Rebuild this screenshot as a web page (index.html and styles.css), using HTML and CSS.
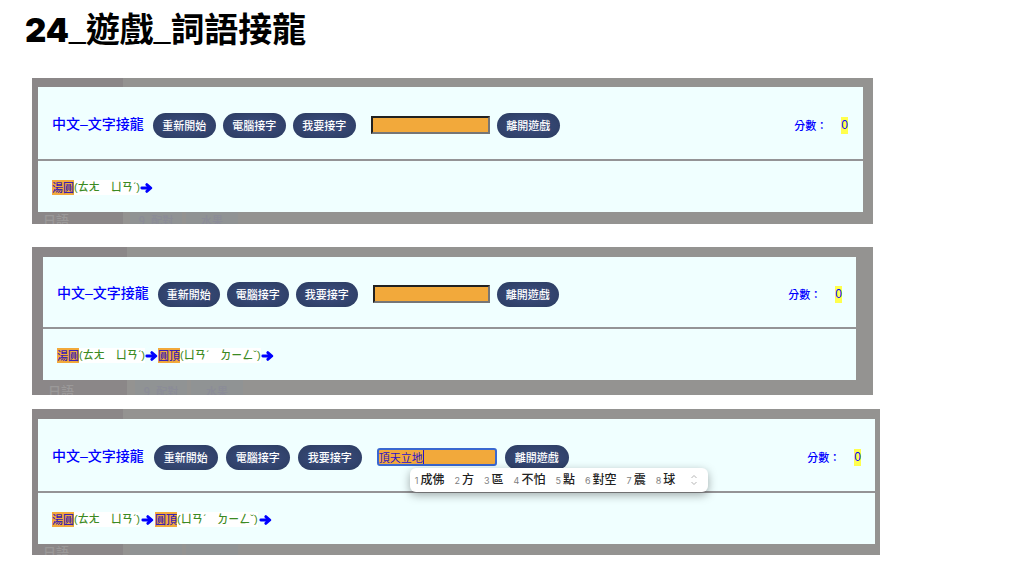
FILE: index.html
```
<!DOCTYPE html>
<html lang="zh-TW">
<head>
    <meta charset="UTF-8">
    <meta name="viewport" content="width=device-width, initial-scale=1.0">
    <title>24_遊戲_詞語接龍</title>
    <link rel="stylesheet" href="styles.css">
</head>
<body>
    <svg width="0" height="0" class="defs">
        <symbol id="arrow" viewBox="0 0 13 10">
            <path d="M1.8 5H10M6.8 1.6L10.8 5L6.8 8.4" fill="none" stroke="#0000ff" stroke-width="2.8" stroke-linecap="round" stroke-linejoin="round"/>
        </symbol>
    </svg>
    <h1><span class="num">24</span><span class="bar">_</span>遊戲<span class="bar">_</span>詞語接龍</h1>

    <section class="screen screen-start">
        <div class="game">
            <div class="toolbar">
                <h2>中文–文字接龍</h2>
                <button type="button">重新開始</button>
                <button type="button">電腦接字</button>
                <button type="button">我要接字</button>
                <input type="text" class="word-input" aria-label="接字">
                <button type="button">離開遊戲</button>
                <div class="score">分數：<span class="points">0</span></div>
            </div>
            <div class="chain">
                <mark>湯圓</mark><span class="zhuyin">(ㄊㄤ　ㄩㄢˊ)</span><svg class="arrow"><use href="#arrow"/></svg>
            </div>
        </div>
        <div class="behind">
            <span class="lang">日語</span>
            <span class="tile">9_配對</span>
            <span class="tile">水果</span>
        </div>
    </section>

    <section class="screen screen-computer">
        <div class="game">
            <div class="toolbar">
                <h2>中文–文字接龍</h2>
                <button type="button">重新開始</button>
                <button type="button">電腦接字</button>
                <button type="button">我要接字</button>
                <input type="text" class="word-input" aria-label="接字">
                <button type="button">離開遊戲</button>
                <div class="score">分數：<span class="points">0</span></div>
            </div>
            <div class="chain">
                <mark>湯圓</mark><span class="zhuyin">(ㄊㄤ　ㄩㄢˊ)</span><svg class="arrow"><use href="#arrow"/></svg><mark>圓頂</mark><span class="zhuyin">(ㄩㄢˊ　ㄉㄧㄥˇ)</span><svg class="arrow"><use href="#arrow"/></svg>
            </div>
        </div>
        <div class="behind">
            <span class="lang">日語</span>
            <span class="tile">9_配對</span>
            <span class="tile">水果</span>
        </div>
    </section>

    <section class="screen screen-player">
        <div class="game">
            <div class="toolbar">
                <h2>中文–文字接龍</h2>
                <button type="button">重新開始</button>
                <button type="button">電腦接字</button>
                <button type="button">我要接字</button>
                <div class="field">
                    <input type="text" class="word-input typing" aria-label="接字" value="頂天立地">
                    <span class="caret"></span>
                    <ol class="candidates">
                        <li><small>1</small>成佛</li>
                        <li><small>2</small>方</li>
                        <li><small>3</small>區</li>
                        <li><small>4</small>不怕</li>
                        <li><small>5</small>點</li>
                        <li><small>6</small>對空</li>
                        <li><small>7</small>震</li>
                        <li><small>8</small>球</li>
                        <li class="more">
                            <svg width="8" height="12" viewBox="0 0 8 12">
                                <path d="M1.5 4L4 1.5L6.5 4M1.5 8L4 10.5L6.5 8" fill="none" stroke="#b5b5b5" stroke-width="1"/>
                            </svg>
                        </li>
                    </ol>
                </div>
                <button type="button">離開遊戲</button>
                <div class="score">分數：<span class="points">0</span></div>
            </div>
            <div class="chain">
                <mark>湯圓</mark><span class="zhuyin">(ㄊㄤ　ㄩㄢˊ)</span><svg class="arrow"><use href="#arrow"/></svg><mark>圓頂</mark><span class="zhuyin">(ㄩㄢˊ　ㄉㄧㄥˇ)</span><svg class="arrow"><use href="#arrow"/></svg>
            </div>
        </div>
        <div class="behind">
            <span class="lang">日語</span>
            <span class="tile"></span>
            <span class="tile"></span>
        </div>
    </section>
</body>
</html>
```

FILE: styles.css
```
* {
    box-sizing: border-box;
}
body {
    font-family: "Noto Sans CJK TC", sans-serif;
    margin: 0;
    padding: 6px 151px 0 32px;
    background-color: white;
    color: #0000ff;
    font-size: 11px;
    font-weight: 500;
}
.defs {
    position: absolute;
}
h1 {
    margin: 0 0 28px -7px;
    color: black;
    font-size: 34px;
    line-height: 44px;
    font-weight: bold;
}
h1 .num {
    font-family: Inter, sans-serif;
    font-size: 33px;
    line-height: 1;
    font-weight: 900;
}
h1 .bar {
    font-family: "Liberation Sans", sans-serif;
    font-size: 30px;
    line-height: 1;
    font-weight: normal;
    vertical-align: 4px;
}
.screen {
    background: linear-gradient(to right, #8b8788 91px, #949391 91px);
}
.screen-start {
    padding: 9px 10px 0 6px;
    margin-bottom: 23px;
}
.screen-computer {
    padding: 10px 17px 0 11px;
    margin-bottom: 14px;
    background: linear-gradient(to right, #8b8788 95px, #949391 95px);
}
.screen-player {
    padding: 10px 5px 0 6px;
    margin-right: -7px;
}
.game {
    background-color: #f0ffff;
}
.toolbar {
    display: flex;
    align-items: center;
    gap: 7px;
    height: 74px;
    padding: 4px 15px 0 14px;
    border-bottom: 2px solid #949496;
}
.screen-computer .toolbar {
    height: 72px;
    padding-right: 14px;
}
.screen-player .toolbar {
    gap: 8px;
    padding-right: 14px;
}
h2 {
    margin: 0 2px 0 0;
    padding-bottom: 3px;
    font-family: "Liberation Sans", "Noto Sans CJK TC", sans-serif;
    font-size: 14px;
    line-height: 20px;
    font-weight: 500;
}
button {
    min-width: 63px;
    font-family: inherit;
    font-size: 11px;
    font-weight: 500;
    line-height: 17px;
    color: white;
    padding: 4px 9px;
    border: none;
    border-radius: 13px;
    background: radial-gradient(#3d4f82, #2b3c60);
    cursor: pointer;
}
.screen-computer button {
    min-width: 62px;
}
.screen-player button {
    min-width: 64px;
}
.word-input {
    width: 119px;
    height: 18px;
    margin-left: 8px;
    padding: 0 1px;
    border: 2px inset #767676;
    background-color: #f2a93b;
    color: #2a10c8;
    font-family: inherit;
    font-size: 11px;
}
.screen-computer .word-input {
    width: 117px;
}
.score {
    display: flex;
    gap: 14px;
    margin-left: auto;
    line-height: 17px;
}
.points {
    background-color: #ffff4d;
    font-family: "Liberation Sans", sans-serif;
    font-size: 12px;
}
.chain {
    display: flex;
    align-items: center;
    height: 51px;
    padding: 2px 14px 0;
    line-height: 15px;
}
mark {
    background-color: #f2a93b;
    color: #3a20b0;
}
.zhuyin {
    background-color: white;
    color: #3c8a22;
    font-family: "Liberation Sans", "Noto Sans CJK TC", sans-serif;
}
.arrow {
    width: 13px;
    height: 10px;
}
.screen-player .arrow {
    width: 15px;
}
/* dimmed page that shows under the game window */
.behind {
    display: flex;
    height: 12px;
    overflow: hidden;
    padding-left: 5px;
    line-height: 16px;
    color: #8b8c98;
}
.lang {
    width: 87px;
    font-size: 13px;
    color: #9b9999;
}
.tile {
    width: 52px;
    margin-right: 4px;
    text-align: center;
    background-color: #909394;
}
.screen-computer .behind {
    height: 15px;
    line-height: 22px;
}
.screen-player .behind {
    height: 11px;
}
.field {
    position: relative;
    margin-left: 7px;
}
.word-input.typing {
    display: block;
    width: 120px;
    margin-left: 0;
    padding: 0;
    border: 2px solid #3a68d0;
    border-radius: 3px;
}
.caret {
    position: absolute;
    left: 46px;
    top: 2px;
    width: 1px;
    height: 14px;
    background-color: #2a10c8;
}
.candidates {
    position: absolute;
    left: 33px;
    top: 20px;
    display: flex;
    align-items: center;
    gap: 10px;
    margin: 0;
    padding: 0 10px 0 5px;
    height: 24px;
    list-style: none;
    white-space: nowrap;
    background-color: white;
    border-radius: 6px;
    box-shadow: 0 3px 10px rgba(0,0,0,0.35);
    color: #222;
    font-size: 12px;
    line-height: 22px;
}
.candidates small {
    margin-right: 2px;
    color: #808080;
    font-family: Inter, sans-serif;
    font-size: 9px;
    font-weight: normal;
}
.more {
    display: flex;
    margin-left: 5px;
}
```
